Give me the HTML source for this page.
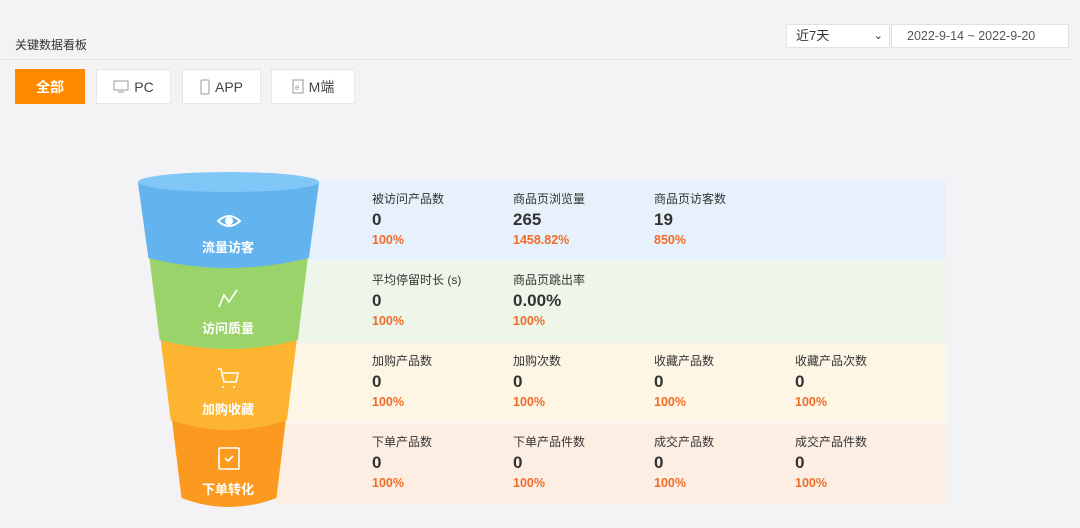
<!DOCTYPE html>
<html><head><meta charset="utf-8"><style>
*{margin:0;padding:0;box-sizing:border-box}
body{width:1080px;height:528px;background:#f3f3f5;font-family:"Liberation Sans","Noto Sans CJK SC",sans-serif;position:relative;overflow:hidden;color:#333}
.abs{position:absolute}
.title{left:15px;top:36px;font-size:12px;color:#333}
.line{left:0;top:59px;width:1070px;height:1px;background:#e2e2e4}
.tab{top:69px;height:35px;background:#fff;border:1px solid #e6e6e6;font-size:14px;color:#444;display:flex;align-items:center;justify-content:center;gap:5px}
.sel{left:786px;top:24px;width:104px;height:24px;background:#fff;border:1px solid #e2e2e2;font-size:13px;padding-left:9px;line-height:22px}
.date{left:891px;top:24px;width:178px;height:24px;background:#fff;border:1px solid #e2e2e2;font-size:12.5px;color:#555;line-height:22px;padding-left:15px}
.row{left:275px;width:671px;height:80px}
.c{position:absolute;width:140px}
.c .l{font-size:12px;color:#333;height:16px}
.c .v{font-size:17px;font-weight:bold;color:#333;margin-top:4px;height:20px}
.c .p{font-size:12.5px;font-weight:bold;color:#f06c2a;margin-top:3px}
.ft{position:absolute;width:180px;left:138px;text-align:center;color:#fff;font-size:13px;font-weight:bold}
</style></head><body>
<div class="abs title">关键数据看板</div>
<div class="abs line"></div>
<div class="abs tab" style="left:15px;width:70px;background:#ff8a00;border-color:#ff8a00;color:#fff;font-weight:bold">全部</div>
<div class="abs tab" style="left:96px;width:75px"><svg width="16" height="13" viewBox="0 0 16 13"><rect x="1" y="1" width="14" height="9" fill="none" stroke="#999"/><path d="M5 12h6" stroke="#999"/></svg>PC</div>
<div class="abs tab" style="left:182px;width:79px"><svg width="10" height="16" viewBox="0 0 10 16"><rect x="1" y="1" width="8" height="14" rx="1" fill="none" stroke="#999"/></svg>APP</div>
<div class="abs tab" style="left:271px;width:84px"><svg width="12" height="15" viewBox="0 0 12 15"><rect x="1" y="1" width="10" height="13" fill="none" stroke="#999"/><text x="3" y="11" font-size="8" fill="#999">e</text></svg>M端</div>
<div class="abs sel">近7天<span style="position:absolute;right:6px;top:0;font-size:11px">&#8964;</span></div>
<div class="abs date">2022-9-14 ~ 2022-9-20</div>

<div class="abs row" style="top:180px;background:#e7f1fb"></div>
<div class="abs row" style="top:262px;background:#eef5e9"></div>
<div class="abs row" style="top:343px;background:#fdf6e4"></div>
<div class="abs row" style="top:424px;background:#fdeee3"></div>

<svg class="abs" style="left:0;top:0" width="1080" height="528">
<path d="M143 183 L181.5 498 Q229 516 276.5 498 L314 183Z" fill="#fb9a1e"/>
<path d="M141 183 L170.7 420 Q229 440 287 420 L316 183Z" fill="#fdb431"/>
<path d="M140 183 L159.7 340 Q229 358 297.8 340 L317 183Z" fill="#9bd36b"/>
<path d="M138 183 L148.4 258 Q229 278 308.9 258 L319 183Z" fill="#63b4ee"/>
<ellipse cx="228.5" cy="182" rx="90.5" ry="10" fill="#80c6f6"/>
<g fill="none" stroke="#fff" stroke-width="2">
<path d="M218 221 Q229 211 240 221 Q229 231 218 221Z"/><circle cx="229" cy="221" r="3" fill="#fff"/>
<path d="M219 307 L224 295 L229 302 L237 290" stroke-width="1.6"/>
<path d="M218 369 h3 l3 13 h12 l2 -9 h-15 M223 386 v2 M234 386 v2" stroke-width="1.6"/>
<rect x="219" y="448" width="20" height="21" rx="1" stroke-width="1.6"/><path d="M225 458 l3 3 l5 -5" stroke-width="1.6"/>
</g>
</svg>
<div class="ft" style="top:237px">流量访客</div>
<div class="ft" style="top:318px">访问质量</div>
<div class="ft" style="top:399px">加购收藏</div>
<div class="ft" style="top:479px">下单转化</div>

<div class="c" style="left:372px;top:190px"><div class="l">被访问产品数</div><div class="v">0</div><div class="p">100%</div></div>
<div class="c" style="left:513px;top:190px"><div class="l">商品页浏览量</div><div class="v">265</div><div class="p">1458.82%</div></div>
<div class="c" style="left:654px;top:190px"><div class="l">商品页访客数</div><div class="v">19</div><div class="p">850%</div></div>

<div class="c" style="left:372px;top:271px"><div class="l">平均停留时长 (s)</div><div class="v">0</div><div class="p">100%</div></div>
<div class="c" style="left:513px;top:271px"><div class="l">商品页跳出率</div><div class="v">0.00%</div><div class="p">100%</div></div>

<div class="c" style="left:372px;top:352px"><div class="l">加购产品数</div><div class="v">0</div><div class="p">100%</div></div>
<div class="c" style="left:513px;top:352px"><div class="l">加购次数</div><div class="v">0</div><div class="p">100%</div></div>
<div class="c" style="left:654px;top:352px"><div class="l">收藏产品数</div><div class="v">0</div><div class="p">100%</div></div>
<div class="c" style="left:795px;top:352px"><div class="l">收藏产品次数</div><div class="v">0</div><div class="p">100%</div></div>

<div class="c" style="left:372px;top:433px"><div class="l">下单产品数</div><div class="v">0</div><div class="p">100%</div></div>
<div class="c" style="left:513px;top:433px"><div class="l">下单产品件数</div><div class="v">0</div><div class="p">100%</div></div>
<div class="c" style="left:654px;top:433px"><div class="l">成交产品数</div><div class="v">0</div><div class="p">100%</div></div>
<div class="c" style="left:795px;top:433px"><div class="l">成交产品件数</div><div class="v">0</div><div class="p">100%</div></div>
</body></html>
